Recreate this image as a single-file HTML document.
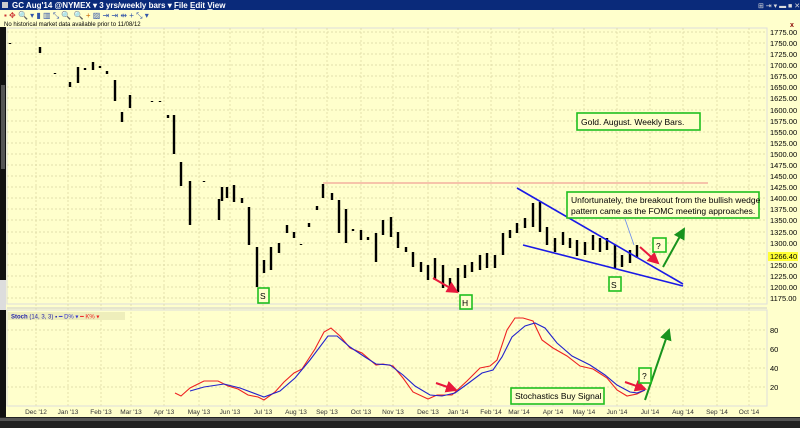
<!DOCTYPE html>
<html><head><meta charset="utf-8"><style>
html,body{margin:0;padding:0;background:#ffffcc;}
svg{display:block;font-family:"Liberation Sans",sans-serif;}
</style></head><body>
<svg width="800" height="428" viewBox="0 0 800 428" xmlns="http://www.w3.org/2000/svg">
<rect width="800" height="428" fill="#ffffcc"/>
<rect x="0" y="0" width="800" height="10" fill="#0a2a7a"/>
<text x="12" y="8" font-size="8" fill="#fff" font-weight="bold">GC Aug'14 @NYMEX ▾   3 yrs/weekly bars ▾   <tspan text-decoration="underline">F</tspan>ile   <tspan text-decoration="underline">E</tspan>dit   <tspan text-decoration="underline">V</tspan>iew</text>
<rect x="2" y="2" width="6" height="6" fill="#ccc"/>
<text x="758" y="8" font-size="7" fill="#ddd">⊞ ⇥ ▾  ▬ ■ ✕</text>
<rect x="0" y="10" width="800" height="10" fill="#ffffcc"/>
<text x="4" y="18" font-size="8" fill="#c33">▪ ✥ <tspan fill="#35a">🔍 ▾  ▮ ▥ ⤡ 🔍 🔍 <tspan fill="#c60">+</tspan> ▨ ⇥ ⇥ ⇹ + ⤡ ▾</tspan></text>
<text x="4" y="26" font-size="6" fill="#000">No historical market data available prior to 11/08/12</text>
<rect x="0" y="27" width="6" height="390" fill="#111"/>
<rect x="1" y="85" width="4" height="84" fill="#555"/>
<rect x="0" y="280" width="6" height="30" fill="#ddd"/>
<rect x="7" y="28" width="760" height="276" fill="none" stroke="#ddd" stroke-width="1"/>
<g stroke="#d9d5a0" stroke-width="0.7" stroke-dasharray="2,2">
<line x1="7" y1="32" x2="767" y2="32"/><line x1="7" y1="43" x2="767" y2="43"/><line x1="7" y1="54" x2="767" y2="54"/><line x1="7" y1="65" x2="767" y2="65"/><line x1="7" y1="76" x2="767" y2="76"/><line x1="7" y1="87" x2="767" y2="87"/><line x1="7" y1="98" x2="767" y2="98"/><line x1="7" y1="110" x2="767" y2="110"/><line x1="7" y1="121" x2="767" y2="121"/><line x1="7" y1="132" x2="767" y2="132"/><line x1="7" y1="143" x2="767" y2="143"/><line x1="7" y1="154" x2="767" y2="154"/><line x1="7" y1="165" x2="767" y2="165"/><line x1="7" y1="176" x2="767" y2="176"/><line x1="7" y1="187" x2="767" y2="187"/><line x1="7" y1="198" x2="767" y2="198"/><line x1="7" y1="209" x2="767" y2="209"/><line x1="7" y1="220" x2="767" y2="220"/><line x1="7" y1="232" x2="767" y2="232"/><line x1="7" y1="243" x2="767" y2="243"/><line x1="7" y1="254" x2="767" y2="254"/><line x1="7" y1="265" x2="767" y2="265"/><line x1="7" y1="276" x2="767" y2="276"/><line x1="7" y1="287" x2="767" y2="287"/><line x1="7" y1="298" x2="767" y2="298"/>
<line x1="7" y1="330" x2="767" y2="330"/><line x1="7" y1="349" x2="767" y2="349"/><line x1="7" y1="368" x2="767" y2="368"/><line x1="7" y1="387" x2="767" y2="387"/>
<line x1="36" y1="28" x2="36" y2="406"/><line x1="68" y1="28" x2="68" y2="406"/><line x1="101" y1="28" x2="101" y2="406"/><line x1="131" y1="28" x2="131" y2="406"/><line x1="164" y1="28" x2="164" y2="406"/><line x1="199" y1="28" x2="199" y2="406"/><line x1="230" y1="28" x2="230" y2="406"/><line x1="263" y1="28" x2="263" y2="406"/><line x1="296" y1="28" x2="296" y2="406"/><line x1="327" y1="28" x2="327" y2="406"/><line x1="361" y1="28" x2="361" y2="406"/><line x1="393" y1="28" x2="393" y2="406"/><line x1="428" y1="28" x2="428" y2="406"/><line x1="458" y1="28" x2="458" y2="406"/><line x1="491" y1="28" x2="491" y2="406"/><line x1="519" y1="28" x2="519" y2="406"/><line x1="553" y1="28" x2="553" y2="406"/><line x1="584" y1="28" x2="584" y2="406"/><line x1="617" y1="28" x2="617" y2="406"/><line x1="650" y1="28" x2="650" y2="406"/><line x1="683" y1="28" x2="683" y2="406"/><line x1="717" y1="28" x2="717" y2="406"/><line x1="749" y1="28" x2="749" y2="406"/>
</g>
<g font-size="7.5" fill="#000">
<text x="770" y="35">1775.00</text><text x="770" y="46">1750.00</text><text x="770" y="57">1725.00</text><text x="770" y="68">1700.00</text><text x="770" y="79">1675.00</text><text x="770" y="90">1650.00</text><text x="770" y="101">1625.00</text><text x="770" y="113">1600.00</text><text x="770" y="124">1575.00</text><text x="770" y="135">1550.00</text><text x="770" y="146">1525.00</text><text x="770" y="157">1500.00</text><text x="770" y="168">1475.00</text><text x="770" y="179">1450.00</text><text x="770" y="190">1425.00</text><text x="770" y="201">1400.00</text><text x="770" y="212">1375.00</text><text x="770" y="223">1350.00</text><text x="770" y="235">1325.00</text><text x="770" y="246">1300.00</text><text x="770" y="268">1250.00</text><text x="770" y="279">1225.00</text><text x="770" y="290">1200.00</text><text x="770" y="301">1175.00</text>
<rect x="768" y="252" width="30" height="9" fill="#ffff33"/><text x="770" y="259">1266.40</text>
<text x="770" y="333">80</text><text x="770" y="352">60</text><text x="770" y="371">40</text><text x="770" y="390">20</text>
</g>
<text x="790" y="27" font-size="7" fill="#800" font-weight="bold">x</text>
<line x1="7" y1="308" x2="767" y2="308" stroke="#ccc"/>
<rect x="7" y="310" width="760" height="96" fill="none" stroke="#ddd"/>
<rect x="8" y="312" width="117" height="8" fill="#eeeebb"/>
<text x="11" y="318.5" font-size="6" fill="#22a"><tspan font-weight="bold">Stoch</tspan>   (14, 3, 3) ▪  <tspan fill="#33c">━ D% ▾</tspan> <tspan fill="#e22">━ K% ▾</tspan></text>
<g font-size="6.5" fill="#333" text-anchor="middle">
<text x="36" y="414">Dec '12</text><text x="68" y="414">Jan '13</text><text x="101" y="414">Feb '13</text><text x="131" y="414">Mar '13</text><text x="164" y="414">Apr '13</text><text x="199" y="414">May '13</text><text x="230" y="414">Jun '13</text><text x="263" y="414">Jul '13</text><text x="296" y="414">Aug '13</text><text x="327" y="414">Sep '13</text><text x="361" y="414">Oct '13</text><text x="393" y="414">Nov '13</text><text x="428" y="414">Dec '13</text><text x="458" y="414">Jan '14</text><text x="491" y="414">Feb '14</text><text x="519" y="414">Mar '14</text><text x="553" y="414">Apr '14</text><text x="584" y="414">May '14</text><text x="617" y="414">Jun '14</text><text x="650" y="414">Jul '14</text><text x="683" y="414">Aug '14</text><text x="717" y="414">Sep '14</text><text x="749" y="414">Oct '14</text>
</g>
<rect x="0" y="417" width="800" height="11" fill="#222"/>
<rect x="0" y="418" width="800" height="3" fill="#555"/>
<line x1="323" y1="183" x2="708" y2="183" stroke="#e88" stroke-width="1"/>
<g stroke="#000" stroke-width="2.4" stroke-linecap="butt">
<path d="M10 43v1M40 47v6M55 73v1M70 82v5M78 67v16M85 68v2M93 62v8M100 66v2M107 71v3M115 80v21M122 112v10M130 95v13M152 101v1M160 101v1M168 115v3M174 115v39M181 162v24M190 181v44M204 181v1M219 199v21M222 187v14M227 187v11M234 185v17M242 198v5M249 207v38M257 247v40M264 260v13M271 247v23M279 243v10M287 225v8M294 232v6M301 244v1M309 223v4M317 206v4M323 184v14M332 193v7M339 200v33M346 209v34M353 229v2M361 230v10M368 237v3M376 233v29M383 220v15M391 217v20M398 232v16M406 247v5M413 252v15M421 262v10M428 265v15M435 258v22M443 265v23M450 278v12M458 268v24M465 265v13M472 262v10M480 255v15M487 253v15M495 255v13M503 233v22M510 230v8M517 223v10M525 218v10M533 203v24M540 202v30M547 227v18M555 238v14M563 232v13M570 238v10M577 240v16M585 242v13M593 235v15M600 238v14M607 238v12M615 245v23M622 255v12M630 250v13M637 245v13"/>
</g>
<g stroke="#1a1ae6" stroke-width="1.6" fill="none">
<line x1="517" y1="188" x2="683" y2="284"/>
<line x1="523" y1="245" x2="683" y2="286"/>
</g>
<line x1="625" y1="219" x2="634" y2="245" stroke="#6688ee" stroke-width="0.8"/>
<defs>
<marker id="ar" markerWidth="6" markerHeight="6" refX="5" refY="3" orient="auto"><path d="M0,0L6,3L0,6z" fill="#e8193c"/></marker>
<marker id="ag" markerWidth="6" markerHeight="6" refX="5" refY="3" orient="auto"><path d="M0,0L6,3L0,6z" fill="#18931e"/></marker>
</defs>
<g stroke-width="2" fill="none">
<line x1="433" y1="278" x2="457" y2="292" stroke="#e8193c" marker-end="url(#ar)"/>
<line x1="640" y1="247" x2="658" y2="263" stroke="#e8193c" marker-end="url(#ar)"/>
<line x1="663" y1="267" x2="684" y2="229" stroke="#18931e" marker-end="url(#ag)"/>
<line x1="436" y1="383" x2="456" y2="390" stroke="#e8193c" marker-end="url(#ar)"/>
<line x1="625" y1="382" x2="645" y2="389" stroke="#e8193c" marker-end="url(#ar)"/>
<line x1="645" y1="400" x2="669" y2="330" stroke="#18931e" marker-end="url(#ag)"/>
</g>
<polyline fill="none" stroke="#e22" stroke-width="1.1" points="175,393 181,396 190,388 204,381 218,381 228,386 238,389 248,395 258,397 264,400 275,392 284,382 294,373 302,369 315,349 324,332 331,328 340,336 350,348 362,353 376,365 383,364 393,366 403,378 413,392 428,399 437,395 452,395 467,381 480,368 490,366 497,360 507,330 515,318 523,318 533,321 542,340 553,348 567,356 580,366 593,369 607,378 617,390 627,396 637,394 645,390"/>
<polyline fill="none" stroke="#22c" stroke-width="1.1" points="190,391 204,387 224,384 240,388 264,397 280,391 295,378 310,360 328,336 337,336 350,347 365,357 376,364 390,365 403,375 415,386 430,395 442,396 455,393 470,382 482,373 493,370 502,357 512,337 525,326 535,323 545,328 557,343 572,356 590,365 605,375 617,385 630,392 637,393 645,390"/>
<g fill="#ffffcc" stroke="#1fbf1f" stroke-width="1.6">
<rect x="258" y="288" width="11" height="15"/>
<rect x="460" y="295" width="12" height="14"/>
<rect x="609" y="277" width="12" height="14"/>
<rect x="653" y="238" width="13" height="14"/>
<rect x="639" y="368" width="12" height="15"/>
<rect x="577" y="113" width="123" height="17"/>
<rect x="567" y="192" width="192" height="26"/>
<rect x="511" y="388" width="93" height="16"/>
</g>
<g font-size="8.5" fill="#000">
<text x="260" y="299">S</text><text x="462" y="306">H</text><text x="611" y="288">S</text><text x="656" y="249">?</text><text x="642" y="379">?</text>
<text x="581" y="125">Gold. August. Weekly Bars.</text>
<text x="571" y="203">Unfortunately, the breakout from the bullish wedge</text>
<text x="571" y="214">pattern came as the FOMC meeting approaches.</text>
<text x="515" y="399">Stochastics Buy Signal</text>
</g>
</svg>
</body></html>
